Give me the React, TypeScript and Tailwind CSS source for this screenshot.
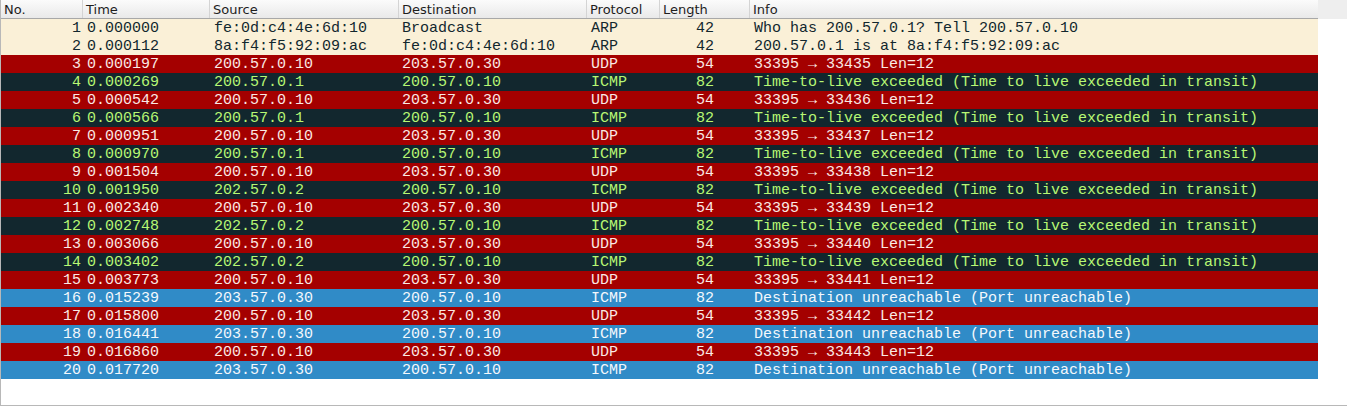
import React from "react";

type Kind = "arp" | "udp" | "ttl" | "unreach";

interface Packet {
  no: number;
  time: string;
  src: string;
  dst: string;
  proto: string;
  len: number;
  info: string;
  kind: Kind;
}

const TTL = "Time-to-live exceeded (Time to live exceeded in transit)";
const UNREACH = "Destination unreachable (Port unreachable)";

const packets: Packet[] = [
  { no: 1, time: "0.000000", src: "fe:0d:c4:4e:6d:10", dst: "Broadcast", proto: "ARP", len: 42, info: "Who has 200.57.0.1? Tell 200.57.0.10", kind: "arp" },
  { no: 2, time: "0.000112", src: "8a:f4:f5:92:09:ac", dst: "fe:0d:c4:4e:6d:10", proto: "ARP", len: 42, info: "200.57.0.1 is at 8a:f4:f5:92:09:ac", kind: "arp" },
  { no: 3, time: "0.000197", src: "200.57.0.10", dst: "203.57.0.30", proto: "UDP", len: 54, info: "33395 → 33435 Len=12", kind: "udp" },
  { no: 4, time: "0.000269", src: "200.57.0.1", dst: "200.57.0.10", proto: "ICMP", len: 82, info: TTL, kind: "ttl" },
  { no: 5, time: "0.000542", src: "200.57.0.10", dst: "203.57.0.30", proto: "UDP", len: 54, info: "33395 → 33436 Len=12", kind: "udp" },
  { no: 6, time: "0.000566", src: "200.57.0.1", dst: "200.57.0.10", proto: "ICMP", len: 82, info: TTL, kind: "ttl" },
  { no: 7, time: "0.000951", src: "200.57.0.10", dst: "203.57.0.30", proto: "UDP", len: 54, info: "33395 → 33437 Len=12", kind: "udp" },
  { no: 8, time: "0.000970", src: "200.57.0.1", dst: "200.57.0.10", proto: "ICMP", len: 82, info: TTL, kind: "ttl" },
  { no: 9, time: "0.001504", src: "200.57.0.10", dst: "203.57.0.30", proto: "UDP", len: 54, info: "33395 → 33438 Len=12", kind: "udp" },
  { no: 10, time: "0.001950", src: "202.57.0.2", dst: "200.57.0.10", proto: "ICMP", len: 82, info: TTL, kind: "ttl" },
  { no: 11, time: "0.002340", src: "200.57.0.10", dst: "203.57.0.30", proto: "UDP", len: 54, info: "33395 → 33439 Len=12", kind: "udp" },
  { no: 12, time: "0.002748", src: "202.57.0.2", dst: "200.57.0.10", proto: "ICMP", len: 82, info: TTL, kind: "ttl" },
  { no: 13, time: "0.003066", src: "200.57.0.10", dst: "203.57.0.30", proto: "UDP", len: 54, info: "33395 → 33440 Len=12", kind: "udp" },
  { no: 14, time: "0.003402", src: "202.57.0.2", dst: "200.57.0.10", proto: "ICMP", len: 82, info: TTL, kind: "ttl" },
  { no: 15, time: "0.003773", src: "200.57.0.10", dst: "203.57.0.30", proto: "UDP", len: 54, info: "33395 → 33441 Len=12", kind: "udp" },
  { no: 16, time: "0.015239", src: "203.57.0.30", dst: "200.57.0.10", proto: "ICMP", len: 82, info: UNREACH, kind: "unreach" },
  { no: 17, time: "0.015800", src: "200.57.0.10", dst: "203.57.0.30", proto: "UDP", len: 54, info: "33395 → 33442 Len=12", kind: "udp" },
  { no: 18, time: "0.016441", src: "203.57.0.30", dst: "200.57.0.10", proto: "ICMP", len: 82, info: UNREACH, kind: "unreach" },
  { no: 19, time: "0.016860", src: "200.57.0.10", dst: "203.57.0.30", proto: "UDP", len: 54, info: "33395 → 33443 Len=12", kind: "udp" },
  { no: 20, time: "0.017720", src: "203.57.0.30", dst: "200.57.0.10", proto: "ICMP", len: 82, info: UNREACH, kind: "unreach" },
];

const rowColors: Record<Kind, string> = {
  arp: "bg-[#faf0d7] text-[#12272e]",
  udp: "bg-[#a40000] text-[#fbe9e4]",
  ttl: "bg-[#12272e] text-[#b7f774]",
  unreach: "bg-[#308bc7] text-[#f4f8fc]",
};

const cols = "grid grid-cols-[82px_127px_189px_188px_73px_90px_568px]";

const headers = ["No.", "Time", "Source", "Destination", "Protocol", "Length", "Info"];

export default function App() {
  return (
    <div className="h-[406px] w-[1347px] overflow-hidden border-b border-l border-[#b8b8b8] bg-white">
      {/* column header */}
      <div className="flex h-[19px]">
        <div
          className={`${cols} w-[1317px] border-b border-[#a8a8a8] bg-gradient-to-b from-[#fbfbfb] to-[#e9e9e9] font-['DejaVu_Sans',sans-serif] text-[13px] leading-[18px] text-[#1e1e1e]`}
        >
          {headers.map((h, i) => (
            <div
              key={h}
              className={`overflow-hidden whitespace-nowrap pl-[3px] pt-[1px] ${
                i < headers.length - 1 ? "border-r border-[#d4d4d4]" : ""
              }`}
            >
              {h}
            </div>
          ))}
        </div>
        <div className="flex-1 bg-[#eeeeee]" />
      </div>

      {/* packet rows */}
      <div className="w-[1317px] font-['Liberation_Mono',monospace] text-[15px] leading-[17px]">
        {packets.map((p) => (
          <div key={p.no} className={`${cols} h-[18px] whitespace-nowrap pt-[1px] ${rowColors[p.kind]}`}>
            <div className="pr-[2px] text-right">{p.no}</div>
            <div className="pl-[4px]">{p.time}</div>
            <div className="pl-[4px]">{p.src}</div>
            <div className="pl-[3px]">{p.dst}</div>
            <div className="pl-[4px]">{p.proto}</div>
            <div className="pr-[36px] text-right">{p.len}</div>
            <div className="pl-[4px]">{p.info}</div>
          </div>
        ))}
      </div>
    </div>
  );
}
